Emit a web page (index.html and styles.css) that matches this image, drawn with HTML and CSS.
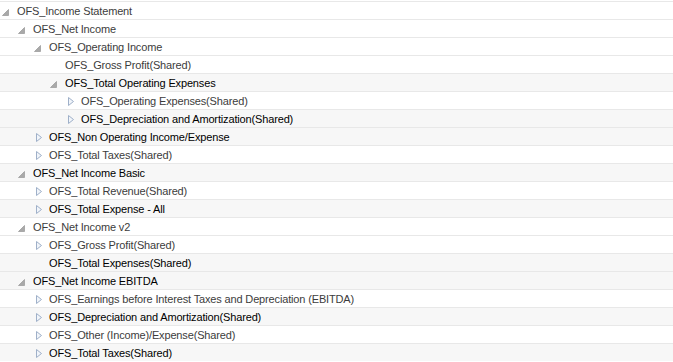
FILE: index.html
```html
<!DOCTYPE html>
<html lang="en">
<head>
  <meta charset="UTF-8" />
  <title>Hierarchy</title>
  <link rel="stylesheet" href="styles.css">
</head>
<body>
  <div class="tree">
    <div class="row lvl-0"><span class="tw exp"><svg viewBox="0 0 16 17"><polygon points="7.5,7.5 7.5,13.5 1.5,13.5"/></svg></span><span class="label">OFS_Income Statement</span></div>
    <div class="row lvl-1"><span class="tw exp"><svg viewBox="0 0 16 17"><polygon points="7.5,7.5 7.5,13.5 1.5,13.5"/></svg></span><span class="label">OFS_Net Income</span></div>
    <div class="row lvl-2"><span class="tw exp"><svg viewBox="0 0 16 17"><polygon points="7.5,7.5 7.5,13.5 1.5,13.5"/></svg></span><span class="label">OFS_Operating Income</span></div>
    <div class="row lvl-3"><span class="tw"></span><span class="label">OFS_Gross Profit(Shared)</span></div>
    <div class="row lvl-3 alt"><span class="tw exp"><svg viewBox="0 0 16 17"><polygon points="7.5,7.5 7.5,13.5 1.5,13.5"/></svg></span><span class="label">OFS_Total Operating Expenses</span></div>
    <div class="row lvl-4"><span class="tw col"><svg viewBox="0 0 16 17"><polygon points="3.5,5.5 8.5,9.5 3.5,13.5"/></svg></span><span class="label">OFS_Operating Expenses(Shared)</span></div>
    <div class="row lvl-4 alt"><span class="tw col"><svg viewBox="0 0 16 17"><polygon points="3.5,5.5 8.5,9.5 3.5,13.5"/></svg></span><span class="label">OFS_Depreciation and Amortization(Shared)</span></div>
    <div class="row lvl-2 alt"><span class="tw col"><svg viewBox="0 0 16 17"><polygon points="3.5,5.5 8.5,9.5 3.5,13.5"/></svg></span><span class="label">OFS_Non Operating Income/Expense</span></div>
    <div class="row lvl-2"><span class="tw col"><svg viewBox="0 0 16 17"><polygon points="3.5,5.5 8.5,9.5 3.5,13.5"/></svg></span><span class="label">OFS_Total Taxes(Shared)</span></div>
    <div class="row lvl-1 alt"><span class="tw exp"><svg viewBox="0 0 16 17"><polygon points="7.5,7.5 7.5,13.5 1.5,13.5"/></svg></span><span class="label">OFS_Net Income Basic</span></div>
    <div class="row lvl-2"><span class="tw col"><svg viewBox="0 0 16 17"><polygon points="3.5,5.5 8.5,9.5 3.5,13.5"/></svg></span><span class="label">OFS_Total Revenue(Shared)</span></div>
    <div class="row lvl-2 alt"><span class="tw col"><svg viewBox="0 0 16 17"><polygon points="3.5,5.5 8.5,9.5 3.5,13.5"/></svg></span><span class="label">OFS_Total Expense - All</span></div>
    <div class="row lvl-1"><span class="tw exp"><svg viewBox="0 0 16 17"><polygon points="7.5,7.5 7.5,13.5 1.5,13.5"/></svg></span><span class="label">OFS_Net Income v2</span></div>
    <div class="row lvl-2"><span class="tw col"><svg viewBox="0 0 16 17"><polygon points="3.5,5.5 8.5,9.5 3.5,13.5"/></svg></span><span class="label">OFS_Gross Profit(Shared)</span></div>
    <div class="row lvl-2 alt"><span class="tw"></span><span class="label">OFS_Total Expenses(Shared)</span></div>
    <div class="row lvl-1 alt"><span class="tw exp"><svg viewBox="0 0 16 17"><polygon points="7.5,7.5 7.5,13.5 1.5,13.5"/></svg></span><span class="label">OFS_Net Income EBITDA</span></div>
    <div class="row lvl-2"><span class="tw col"><svg viewBox="0 0 16 17"><polygon points="3.5,5.5 8.5,9.5 3.5,13.5"/></svg></span><span class="label">OFS_Earnings before Interest Taxes and Depreciation (EBITDA)</span></div>
    <div class="row lvl-2 alt"><span class="tw col"><svg viewBox="0 0 16 17"><polygon points="3.5,5.5 8.5,9.5 3.5,13.5"/></svg></span><span class="label">OFS_Depreciation and Amortization(Shared)</span></div>
    <div class="row lvl-2"><span class="tw col"><svg viewBox="0 0 16 17"><polygon points="3.5,5.5 8.5,9.5 3.5,13.5"/></svg></span><span class="label">OFS_Other (Income)/Expense(Shared)</span></div>
    <div class="row lvl-2 alt"><span class="tw col"><svg viewBox="0 0 16 17"><polygon points="3.5,5.5 8.5,9.5 3.5,13.5"/></svg></span><span class="label">OFS_Total Taxes(Shared)</span></div>
  </div>
</body>
</html>
```
FILE: styles.css
```css
body {
  margin: 0;
  background: #ffffff;
  font-family: 'Liberation Sans', Arial, sans-serif;
  font-size: 11px;
  letter-spacing: -0.15px;
  color: #3c3c3c;
}
.tree {
  padding-top: 1px;
}
.row {
  display: flex;
  align-items: center;
  height: 17px;
  border-top: 1px solid #e8e8e8;
  white-space: nowrap;
}
.row.alt {
  background: #f7f7f7;
  color: #000;
}
.lvl-0 { padding-left: 1px; }
.lvl-1 { padding-left: 17px; }
.lvl-2 { padding-left: 33px; }
.lvl-3 { padding-left: 49px; }
.lvl-4 { padding-left: 65px; }
.tw {
  width: 16px;
  height: 17px;
  flex-shrink: 0;
}
.tw svg {
  display: block;
  width: 16px;
  height: 17px;
}
.exp polygon {
  fill: #a9a9a9;
  stroke: #a9a9a9;
  stroke-width: 1;
  stroke-linejoin: miter;
}
.col polygon {
  fill: #f1f5fa;
  stroke: #9fb0c9;
  stroke-width: 1;
}
.label {
  line-height: 17px;
  padding-top: 1px;
}
```
